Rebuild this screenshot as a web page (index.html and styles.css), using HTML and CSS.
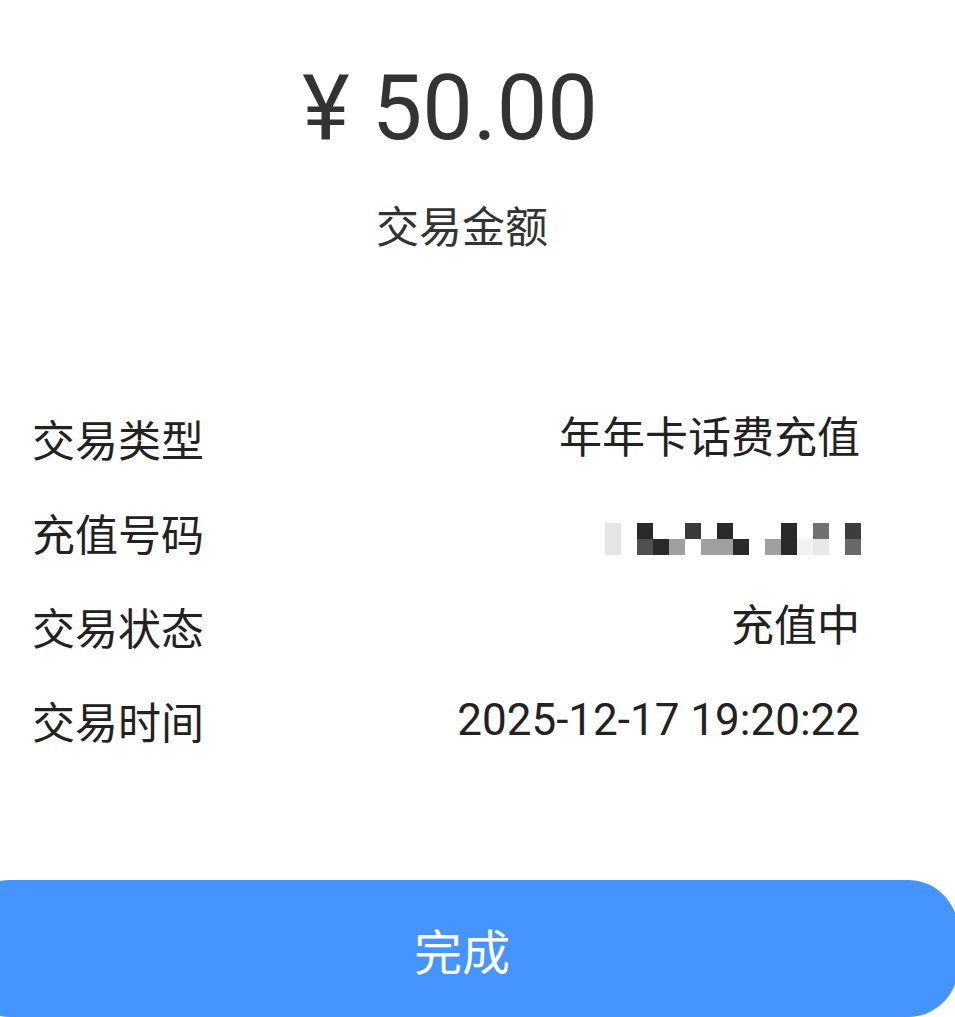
FILE: index.html
```html
<!DOCTYPE html>
<html lang="zh-CN">
<head>
  <meta charset="UTF-8">
  <meta name="viewport" content="width=device-width, initial-scale=1.0">
  <title>交易详情</title>
  <link rel="stylesheet" href="styles.css">
</head>
<body>
  <div class="amount">¥ 50.00</div>
  <div class="amount-label">交易金额</div>

  <div class="details">
    <div class="row">
      <span class="label">交易类型</span>
      <span class="value">年年卡话费充值</span>
    </div>
    <div class="row">
      <span class="label">充值号码</span>
      <div class="mosaic" id="mosaic"></div>
    </div>
    <div class="row">
      <span class="label">交易状态</span>
      <span class="value">充值中</span>
    </div>
    <div class="row">
      <span class="label">交易时间</span>
      <span class="value date">2025-12-17 19:20:22</span>
    </div>
  </div>

  <button class="done">完成</button>

  <script>
    // 号码打码后的色块
    const cells = [
      '#e5e5e5', '#fff', '#2a2a2a', '#fff', '#fff', '#3a3a3a', '#fff', '#2a2a2a',
      '#fff', '#fff', '#fff', '#2a2a2a', '#fff', '#717171', '#fff', '#3d3d3d',
      '#e5e5e5', '#fff', '#505050', '#2a2a2a', '#a0a0a0', '#fff', '#a0a0a0', '#a0a0a0',
      '#2a2a2a', '#fff', '#a0a0a0', '#2a2a2a', '#f2f2f2', '#e8e8e8', '#fff', '#686868'
    ];
    const mosaic = document.getElementById('mosaic');
    cells.forEach(color => {
      const cell = document.createElement('span');
      cell.style.background = color;
      mosaic.appendChild(cell);
    });
  </script>
</body>
</html>
```

FILE: styles.css
```css
body {
  margin: 0;
  background: #fff;
  font-family: Roboto, "Noto Sans CJK SC", sans-serif;
  overflow: hidden;
}
.amount {
  padding: 59px 55px 0 0;
  font-size: 90px;
  line-height: 100px;
  color: #333;
  text-align: center;
}
.amount-label {
  margin-top: 35px;
  padding-right: 31px;
  font-family: "Noto Sans CJK SC", sans-serif;
  font-size: 43px;
  line-height: 60px;
  color: #333;
  text-align: center;
}
.details {
  margin-top: 137px;
  padding: 0 95px 0 32px;
}
.row {
  display: flex;
  justify-content: space-between;
  align-items: center;
  height: 94px;
  color: #222;
}
.label {
  font-family: "Noto Sans CJK SC", sans-serif;
  font-size: 43px;
  line-height: 60px;
}
.value {
  font-family: Roboto, "Noto Sans CJK SC", sans-serif;
  font-size: 43px;
  line-height: 60px;
}
.date {
  font-size: 44px;
}
.mosaic {
  display: grid;
  grid-template-columns: repeat(16, 16px);
  grid-auto-rows: 16px;
  margin-top: 13px;
  margin-right: -1px;
}
.done {
  display: block;
  width: 998px;
  height: 137px;
  margin: 113px 0 0 -40px;
  padding: 0 0 0 6px;
  border: none;
  border-radius: 50px;
  background: #4594ff;
  color: #fff;
  font-family: "Noto Sans CJK SC", sans-serif;
  font-size: 48px;
}
```
